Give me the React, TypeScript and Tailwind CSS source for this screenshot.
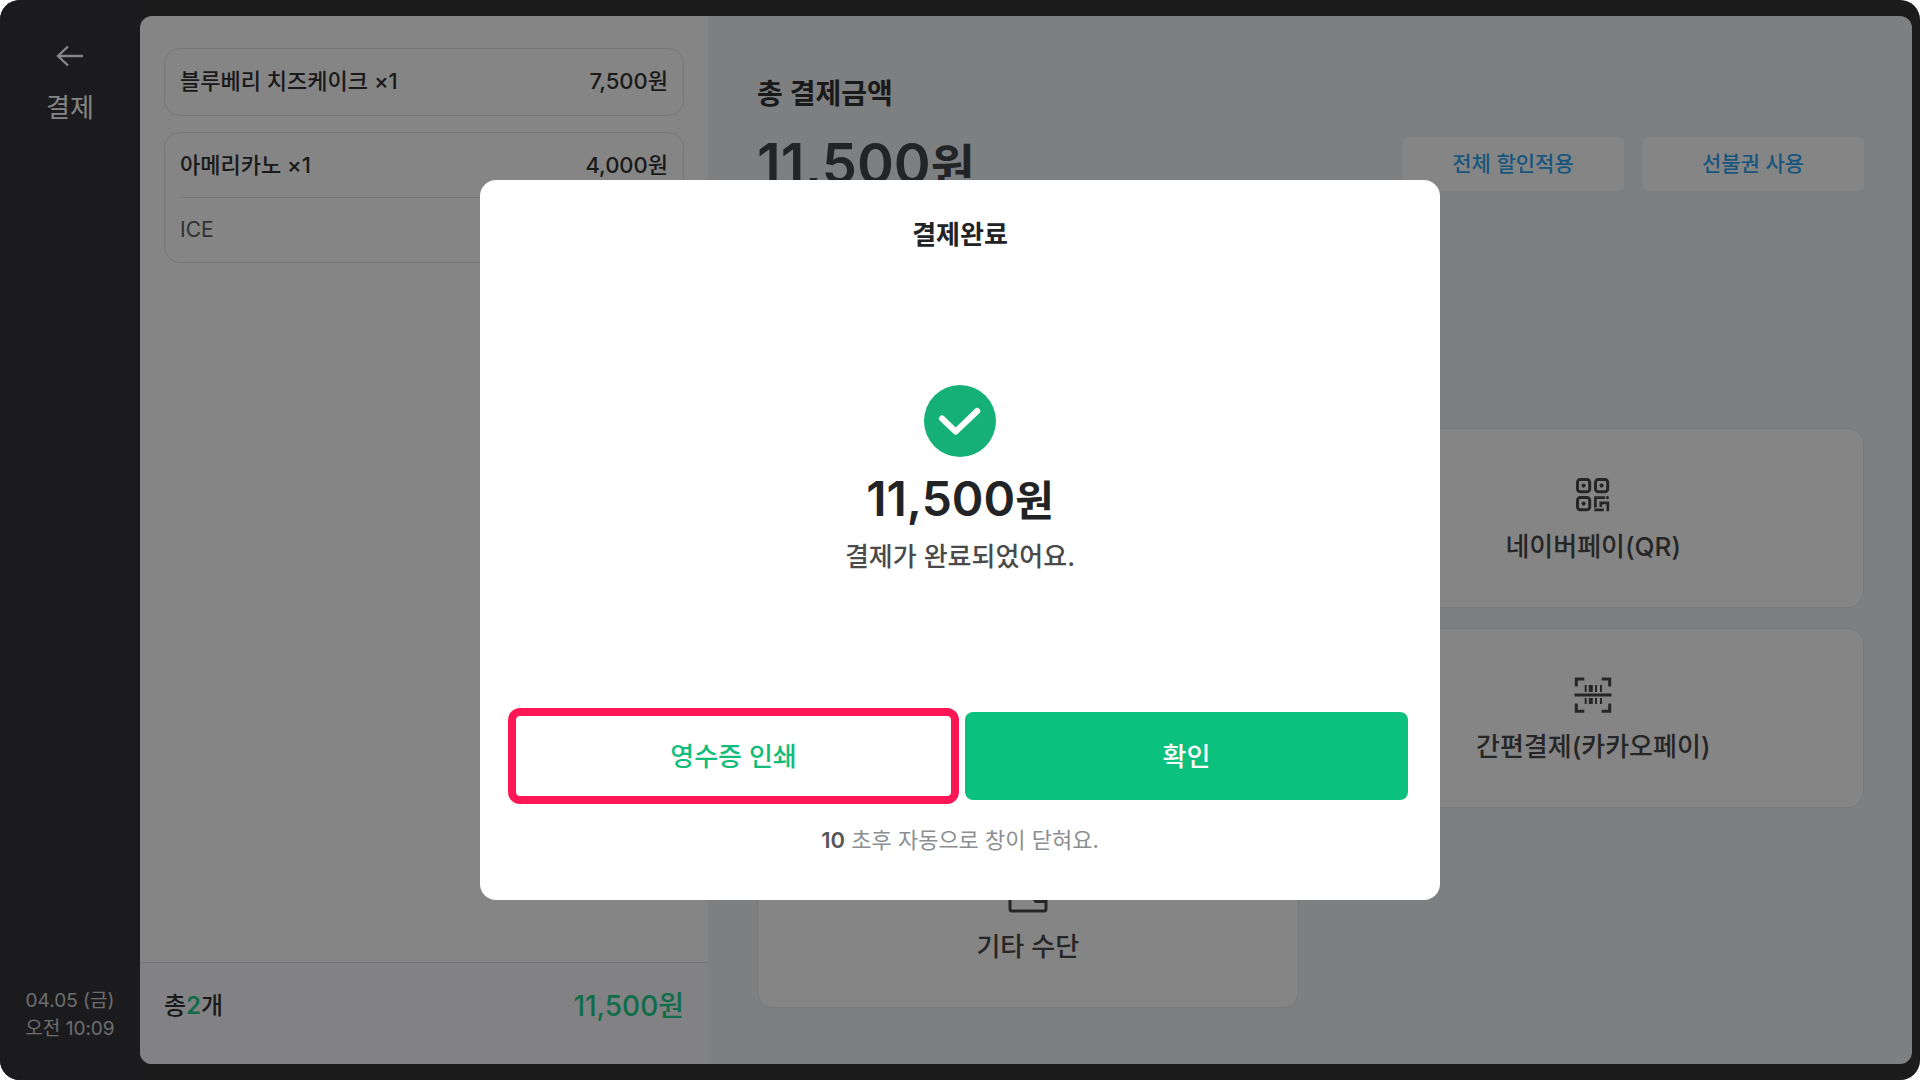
import type { ReactNode } from "react";

const ORDERS = [
  { name: "블루베리 치즈케이크 ×1", price: "7,500원", options: [] as string[] },
  { name: "아메리카노 ×1", price: "4,000원", options: ["ICE"] },
];

const METHODS: { label: string; icon: ReactNode; column: string }[] = [
  { label: "네이버페이(QR)", icon: <QrIcon />, column: "col-start-2" },
  { label: "간편결제(카카오페이)", icon: <BarcodeIcon />, column: "col-start-2" },
  { label: "기타 수단", icon: <WalletIcon />, column: "col-start-1" },
];

function BackIcon() {
  return (
    <svg width="28" height="24" viewBox="0 0 28 24" fill="none" stroke="currentColor" strokeWidth="2.4" aria-hidden="true">
      <path d="M27 12H2M12 2.500L2 12l10 9.500" />
    </svg>
  );
}

function QrIcon() {
  return (
    <svg width="36" height="36" viewBox="0 0 36 36" fill="none" stroke="currentColor" strokeWidth="3" aria-hidden="true">
      <rect x="2.5" y="2.5" width="12.2" height="12.2" rx="2.8" />
      <rect x="20.5" y="2.5" width="12.2" height="12.2" rx="2.8" />
      <rect x="2.5" y="20.5" width="12.2" height="12.2" rx="2.8" />
      <g fill="currentColor" stroke="none">
        <circle cx="8.6" cy="8.6" r="2.1" />
        <circle cx="26.600" cy="8.600" r="2.1" />
        <circle cx="8.600" cy="26.600" r="2.1" />
        <circle cx="32.400" cy="20.600" r="1.600" />
      </g>
      <path d="M20.400 30.400v-9.800h9.600M25.800 30v-4.200h7v8.500M19.300 32.800h9.500" strokeWidth="2.700" />
    </svg>
  );
}

function BarcodeIcon() {
  return (
    <svg width="38" height="36" viewBox="0 0 38 36" fill="none" stroke="currentColor" aria-hidden="true">
      <path d="M2.300 9.500V2h8M27.700 2h8v7.500M2.300 26.500V34.200h8M27.700 34.200h8V26.500" strokeWidth="3" />
      <path d="M.5 18h37" strokeWidth="3" />
      <path d="M11.700 8v7M22 8v7M27 8v7M11.700 21v6M22 21v6M27 21v6" strokeWidth="2" />
      <path d="M16.800 8v7M16.800 21v6" strokeWidth="4" />
    </svg>
  );
}

function WalletIcon() {
  return (
    <svg width="40" height="36" viewBox="0 0 40 36" fill="none" stroke="currentColor" strokeWidth="3" aria-hidden="true">
      <path d="M4 2h32a2 2 0 0 1 2 2v28a2 2 0 0 1-2 2H4a2 2 0 0 1-2-2V4a2 2 0 0 1 2-2z" />
      <path d="M38 13H29a6 6 0 0 0-4 8l3 3.500h10" />
    </svg>
  );
}

function Sidebar() {
  return (
    <aside className="flex w-[140px] shrink-0 flex-col items-center justify-between bg-[#343438] pt-11 pb-[37px] text-white">
      <a href="#back" className="flex flex-col items-center gap-6">
        <BackIcon />
        <span className="text-[26px] leading-8">결제</span>
      </a>
      <p className="text-center text-[19px] leading-7 text-[#d2d2d4]">
        04.05 (금)
        <br />
        오전 10:09
      </p>
    </aside>
  );
}

function OrderPanel() {
  return (
    <section className="flex w-[568px] shrink-0 flex-col bg-white text-[#323232]">
      <ul className="flex flex-1 flex-col gap-4 px-6 pt-8">
        {ORDERS.map((o) => (
          <li key={o.name} className="min-h-[68px] rounded-2xl border border-[#e4e4e4] px-[15px]">
            <div className="flex h-16 items-center justify-between text-[22px] font-medium">
              <span>{o.name}</span>
              <span>{o.price}</span>
            </div>
            {o.options.map((opt) => (
              <p key={opt} className="flex h-[65px] items-center border-t border-[#e4e4e4] text-[21px] text-[#606060]">
                {opt}
              </p>
            ))}
          </li>
        ))}
      </ul>
      <div className="flex h-[102px] items-start justify-between border-t border-[#e0e0e3] bg-[#fafafd] px-6 pt-[25px]">
        <p className="text-2xl leading-9 font-medium">
          총<span className="font-semibold text-[#1fcf8c]">2</span>개
        </p>
        <p className="text-[28px] leading-9 font-medium text-[#1fcf8c]">11,500원</p>
      </div>
    </section>
  );
}

function PaymentPanel() {
  return (
    <main className="flex-1 bg-[#f0f4f6] pt-[60px] pr-12 pl-[49px]">
      <h1 className="text-[28px] leading-9 font-semibold text-[#323232]">총 결제금액</h1>
      <div className="mt-5 flex items-center justify-between">
        <p className="text-[56px] leading-[64px] font-semibold text-[#444649]">
          11,500<span className="text-5xl">원</span>
        </p>
        <div className="flex gap-[18px]">
          {["전체 할인적용", "선불권 사용"].map((label) => (
            <button
              key={label}
              type="button"
              className="h-[54px] w-[222px] rounded-md bg-white text-[21px] font-medium text-[#2ea6f0]"
            >
              {label}
            </button>
          ))}
        </div>
      </div>
      <div className="mt-[232px] grid grid-cols-2 gap-x-6 gap-y-5">
        {METHODS.map((m) => (
          <button
            key={m.label}
            type="button"
            className={`flex h-[180px] flex-col items-center justify-center gap-5 rounded-2xl border border-[#e4e8ea] bg-white pt-0.5 text-[26px] leading-7 font-medium text-[#4a4a4a] ${m.column}`}
          >
            {m.icon}
            {m.label}
          </button>
        ))}
      </div>
    </main>
  );
}

function CompleteDialog() {
  return (
    <div className="absolute inset-0 flex items-center justify-center bg-black/48">
      <div
        role="dialog"
        aria-labelledby="dialog-title"
        className="flex h-[720px] w-[960px] flex-col items-center rounded-2xl bg-white px-8 pt-[37px] pb-[42px] text-[#222325]"
      >
        <h2 id="dialog-title" className="text-[26px] leading-9 font-semibold">
          결제완료
        </h2>
        <div className="flex flex-1 flex-col items-center justify-center pb-1.5">
          <svg width="72" height="72" viewBox="0 0 72 72" fill="none" aria-hidden="true">
            <circle cx="36" cy="36" r="36" fill="#15b077" />
            <path
              d="M18 33.500l13.700 13.200L53.200 26"
              stroke="#fff"
              strokeWidth="6"
              strokeLinecap="round"
              strokeLinejoin="round"
            />
          </svg>
          <p className="mt-3 text-5xl leading-[60px] font-semibold">
            11,500<span className="text-[42px]">원</span>
          </p>
          <p className="mt-2 text-[26px] leading-9 font-medium text-[#4a4a4a]">결제가 완료되었어요.</p>
        </div>
        <div className="flex w-full gap-2.5">
          <button
            type="button"
            className="h-[88px] flex-1 rounded-lg bg-white text-[26px] font-medium text-[#12bd7c] outline-8 -outline-offset-4 outline-[#ff1654]"
          >
            영수증 인쇄
          </button>
          <button type="button" className="h-[88px] flex-1 rounded-lg bg-[#0cc17e] text-[26px] font-medium text-white">
            확인
          </button>
        </div>
        <p className="mt-[22px] text-[22px] leading-9 text-[#8b8e91]">
          <strong className="font-semibold text-[#555759]">10</strong> 초후 자동으로 창이 닫혀요.
        </p>
      </div>
    </div>
  );
}

export default function App() {
  return (
    <div className="bg-white font-[Inter,'Noto_Sans_CJK_KR',sans-serif]" lang="ko">
      <div className="relative flex min-h-screen overflow-hidden rounded-[20px] bg-[#363636]">
        <Sidebar />
        <div className="my-4 mr-2 flex flex-1 overflow-hidden rounded-xl">
          <OrderPanel />
          <PaymentPanel />
        </div>
        <CompleteDialog />
      </div>
    </div>
  );
}
